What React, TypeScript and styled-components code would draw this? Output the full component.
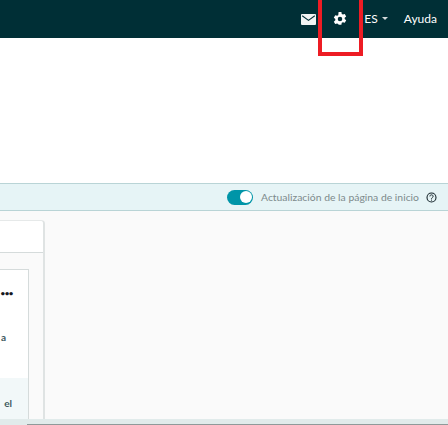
import React from "react";
import styled, { createGlobalStyle } from "styled-components";

const Global = createGlobalStyle`
  html, body { margin: 0; padding: 0; background: #fff; }
  body { font-family: "Lato", "Liberation Sans", sans-serif; }
`;

const Page = styled.div`
  position: relative;
  width: 448px;
  height: 425px;
  overflow: hidden;
  display: flex;
  flex-direction: column;
  background: #fff;
`;

const TopBar = styled.header`
  height: 38px;
  flex: none;
  background: #002f36;
  display: flex;
  align-items: center;
  justify-content: flex-end;
  color: #fff;
  font-size: 12px;
  padding-right: 11px;
  box-sizing: border-box;
`;

const MailIcon = styled.svg`
  display: block;
  flex: none;
  margin-right: 17px;
`;

const GearIcon = styled.svg`
  display: block;
  flex: none;
`;

const HelpIcon = styled.svg`
  display: block;
  flex: none;
`;

const Lang = styled.span`
  display: flex;
  align-items: center;
  gap: 4px;
  margin-left: 17px;
  padding-bottom: 2px;
`;

const Caret = styled.i`
  width: 0;
  height: 0;
  margin-top: 1px;
  border-left: 3px solid transparent;
  border-right: 3px solid transparent;
  border-top: 3px solid #d5dbdb;
`;

const Help = styled.span`
  margin-left: 16px;
  padding-bottom: 2px;
`;

const Blank = styled.div`
  height: 145px;
  flex: none;
`;

const Banner = styled.div`
  height: 28px;
  flex: none;
  box-sizing: border-box;
  background: #e6f4f6;
  border-top: 1px solid #b9d4d6;
  border-bottom: 1px solid #b9d4d6;
  display: flex;
  align-items: center;
  justify-content: flex-end;
  padding-right: 11px;
`;

const Toggle = styled.span`
  width: 26px;
  height: 15px;
  border-radius: 8px;
  background: #0095a8;
  display: flex;
  align-items: center;
  justify-content: flex-end;
  padding-right: 1.5px;
  box-sizing: border-box;
  margin-right: 8px;
  &::after {
    content: "";
    width: 12px;
    height: 12px;
    border-radius: 50%;
    background: #fff;
  }
`;

const BannerLabel = styled.span`
  font-size: 10.4px;
  color: #7d8a8c;
  margin-right: 7px;
`;

const Content = styled.main`
  flex: 1;
  min-height: 0;
  background: #fafafa;
  padding-top: 9px;
`;

const Card = styled.section`
  width: 45px;
  height: 199px;
  box-sizing: border-box;
  background: #fafafa;
  border-right: 2px solid #dfe3e3;
  border-top: 1px solid #e6e9e9;
  border-top-right-radius: 4px;
  display: flex;
  flex-direction: column;
`;

const CardHead = styled.div`
  height: 32px;
  flex: none;
  box-sizing: border-box;
  background: #fff;
  border-bottom: 1px solid #d5dbdb;
  border-top-right-radius: 3px;
`;

const Inner = styled.div`
  width: 29px;
  margin-top: 16px;
  flex: 1;
  box-sizing: border-box;
  background: #fff;
  border-top: 1px solid #d5dbdb;
  border-right: 1px solid #d5dbdb;
  display: flex;
  flex-direction: column;
  font-size: 10px;
  font-weight: 700;
  color: #3e5a60;
`;

const Row = styled.div<{ $h: number; $inset: number; $tint?: boolean; $top?: number }>`
  height: ${(p) => p.$h}px;
  flex: none;
  box-sizing: border-box;
  padding-right: ${(p) => p.$inset}px;
  padding-top: ${(p) => p.$top ?? 0}px;
  display: flex;
  align-items: center;
  justify-content: flex-end;
  background: ${(p) => (p.$tint ? "#f2f8f9" : "transparent")};
`;

const Dots = styled.span`
  font-size: 8px;
  letter-spacing: -0.5px;
  color: #16191f;
`;

const FooterBand = styled.div`
  height: 6px;
  flex: none;
  background: #e1ebeb;
  display: flex;
  flex-direction: column;
  justify-content: flex-end;
  align-items: flex-end;
`;

const FooterRule = styled.div`
  width: 421px;
  height: 1px;
  background: #8f9a9a;
`;

const Highlight = styled.div`
  position: absolute;
  left: 318px;
  top: -4px;
  width: 45px;
  height: 60px;
  box-sizing: border-box;
  border: 4px solid #ed1c24;
`;

export default function App() {
  return (
    <Page>
      <Global />
      <TopBar>
        <MailIcon width="15" height="11" viewBox="0 0 15 11">
          <rect width="15" height="11" rx="1" fill="#f2f4f4" />
          <path d="M1.2 1.8 7.5 6.4l6.3-4.6" fill="none" stroke="#002f36" strokeWidth="1.1" />
        </MailIcon>
        <GearIcon width="14" height="14" viewBox="0 0 24 24">
          <path
            fill="#fff"
            fillRule="evenodd"
            d="M9.6 0h4.8l.6 3.3c.7.3 1.4.6 2 1.1l3.2-1.1 2.4 4.2-2.6 2.2c.1.8.1 1.6 0 2.4l2.6 2.2-2.4 4.2-3.2-1.1c-.6.5-1.3.8-2 1.1l-.6 3.3H9.6L9 20.7c-.7-.3-1.4-.6-2-1.1l-3.2 1.1-2.4-4.2L4 14.3c-.1-.8-.1-1.6 0-2.4L1.4 9.7l2.4-4.2L7 6.6c.6-.5 1.3-.8 2-1.1zM12 8.2a3.9 3.9 0 1 0 0 7.8 3.9 3.9 0 0 0 0-7.8z"
          />
        </GearIcon>
        <Lang>
          ES
          <Caret />
        </Lang>
        <Help>Ayuda</Help>
      </TopBar>
      <Blank />
      <Banner>
        <Toggle />
        <BannerLabel>Actualización de la página de inicio</BannerLabel>
        <HelpIcon width="11" height="11" viewBox="0 0 11 11">
          <circle cx="5.5" cy="5.5" r="4.5" fill="none" stroke="#16252b" strokeWidth="1.1" />
          <path d="M3.9 4.4c0-2.1 3.2-2.1 3.2 0 0 1.2-1.6 1.2-1.6 2.4" fill="none" stroke="#16252b" strokeWidth="1" />
          <rect x="5" y="7.6" width="1" height="1" fill="#16252b" />
        </HelpIcon>
      </Banner>
      <Content>
        <Card>
          <CardHead />
          <Inner>
            <Row $h={46} $inset={15}>
              <Dots>•••</Dots>
            </Row>
            <Row $h={42} $inset={22}>a</Row>
            <Row $h={20} $inset={16} />
            <Row $h={41} $inset={16} $top={9} $tint>el</Row>
          </Inner>
        </Card>
      </Content>
      <FooterBand>
        <FooterRule />
      </FooterBand>
      <Highlight />
    </Page>
  );
}
